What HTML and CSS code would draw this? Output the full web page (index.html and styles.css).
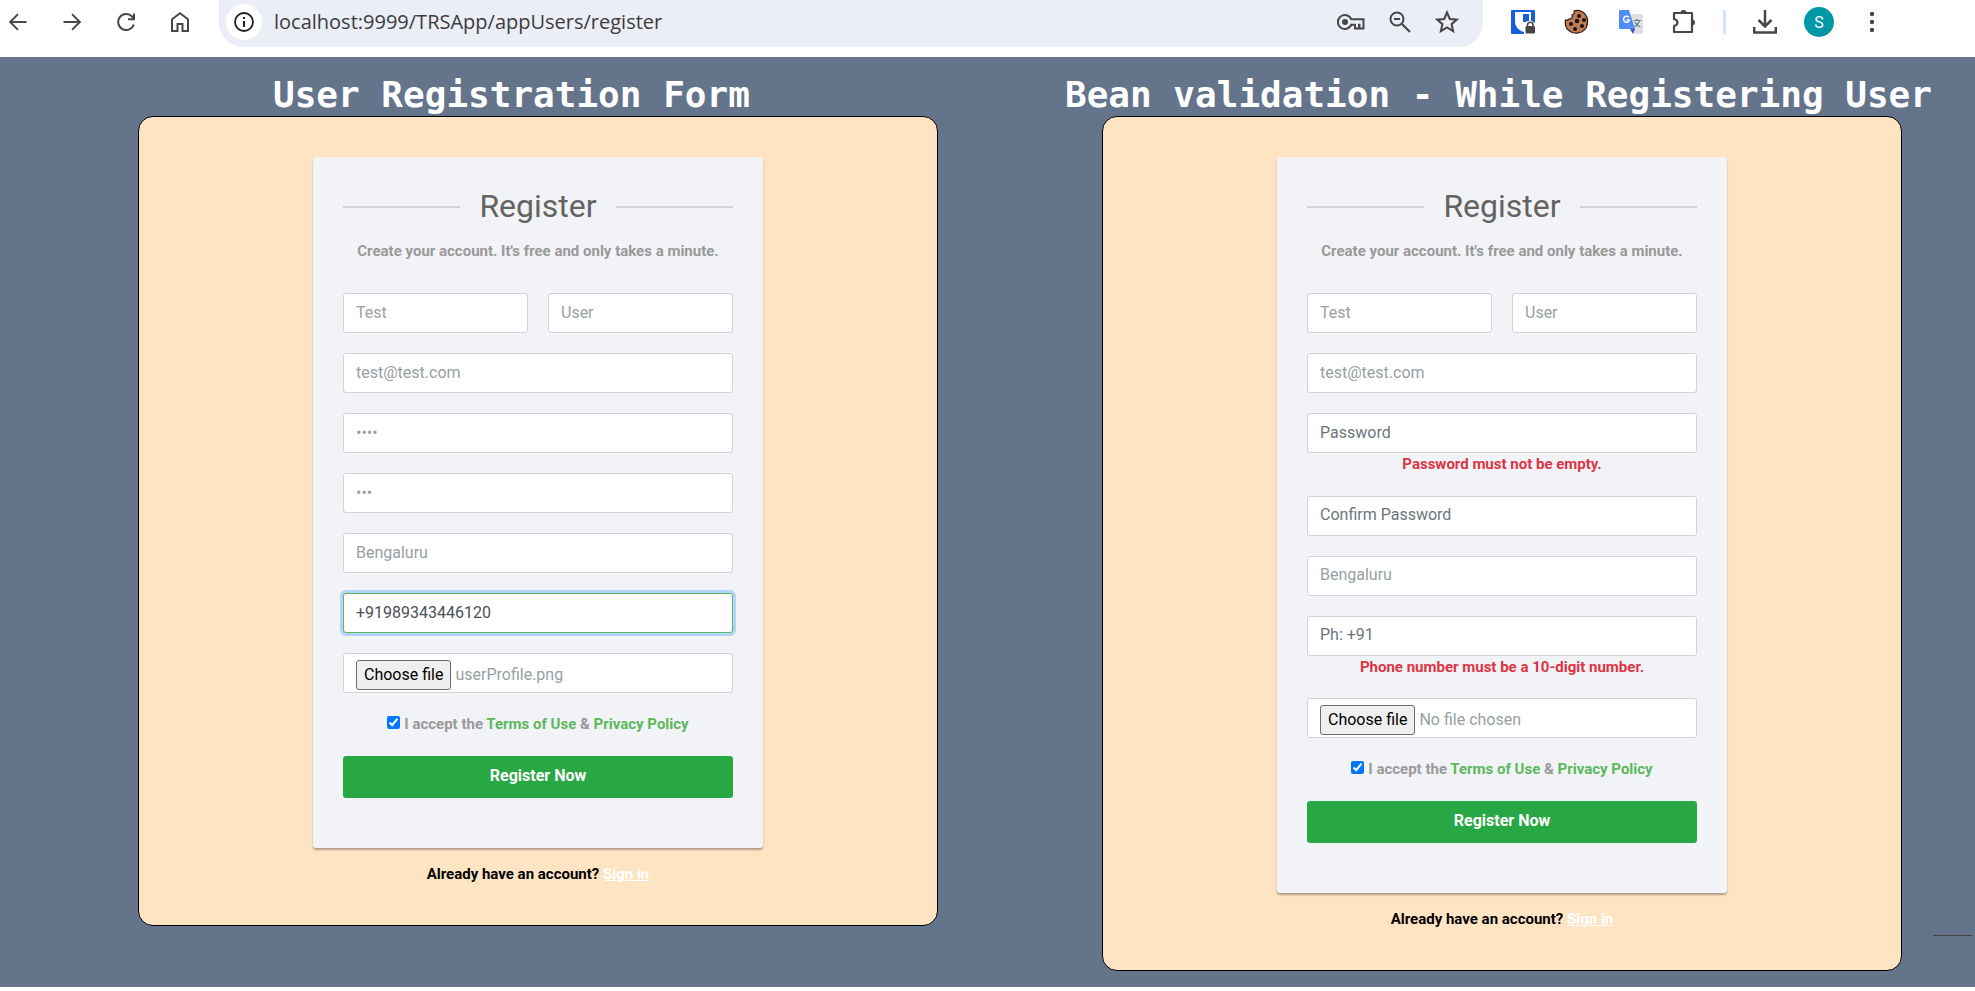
FILE: index.html
```html
<!DOCTYPE html>
<html lang="en">
<head>
<meta charset="utf-8">
<title>User Registration</title>
<link rel="stylesheet" href="styles.css">
</head>
<body>
<header class="toolbar">
  <nav class="nav" aria-label="Browser">
    <button class="icon-btn" type="button" aria-label="Back"><svg width="18" height="18" viewBox="0 0 18 18"><path d="M17.500 9H1.500M9 1.200L1.200 9L9 16.800" fill="none" stroke="#474747" stroke-width="1.900"/></svg></button>
    <button class="icon-btn" type="button" aria-label="Forward"><svg width="18" height="18" viewBox="0 0 18 18"><path d="M.5 9H16.500M9 1.200L16.800 9L9 16.800" fill="none" stroke="#474747" stroke-width="1.900"/></svg></button>
    <button class="icon-btn" type="button" aria-label="Reload"><svg width="18" height="18" viewBox="0 0 18 18"><path d="M16.800 11.500A8 8 0 1 1 15 3.500L17 5.700M17 .5V6.200H11" fill="none" stroke="#474747" stroke-width="2"/></svg></button>
    <button class="icon-btn" type="button" aria-label="Home"><svg width="18" height="20" viewBox="0 0 18 20"><path d="M1 7.300L9 1.300L17 7.300V19H11.500V12H6.500V19H1Z" fill="none" stroke="#474747" stroke-width="2"/></svg></button>
  </nav>
  <div class="address">
    <span class="site-info"><svg width="20" height="20" viewBox="0 0 20 20"><circle cx="10" cy="10" r="9" fill="none" stroke="#1f1f1f" stroke-width="1.800"/><path d="M10 9V15M10 5V7" stroke="#1f1f1f" stroke-width="2"/></svg></span>
    <input class="url" type="text" aria-label="Address" value="localhost:9999/TRSApp/appUsers/register">
    <div class="address-icons">
      <button class="icon-btn" type="button" aria-label="Passwords"><svg width="28" height="18" viewBox="0 0 28 18"><path d="M14.300 6.300A7 7 0 1 0 14.300 11.700H18V15.500H22V11.700H22.500V15.500H26.500V6.300Z" fill="none" stroke="#474747" stroke-width="2"/><circle cx="8" cy="9" r="3" fill="#474747"/></svg></button>
      <button class="icon-btn" type="button" aria-label="Zoom"><svg width="22" height="22" viewBox="0 0 22 22"><circle cx="8" cy="8" r="6.500" fill="none" stroke="#474747" stroke-width="2"/><path d="M13 13L21 21M5 8H11" stroke="#474747" stroke-width="2.200"/></svg></button>
      <button class="icon-btn" type="button" aria-label="Bookmark"><svg width="24" height="24" viewBox="0 0 22 22"><path d="M11 2.300L13.600 8.200L20 8.800L15.200 13L16.600 19.300L11 16L5.400 19.300L6.800 13L2 8.800L8.400 8.200Z" fill="none" stroke="#474747" stroke-width="1.900"/></svg></button>
    </div>
  </div>
  <div class="extensions">
    <button class="icon-btn" type="button" aria-label="Bitwarden"><svg width="26" height="26" viewBox="0 0 26 26"><rect x="1" y="1" width="24" height="24" rx="1" fill="#175ddc"/><path d="M5 3H21V13Q21 20 13 23Q5 19 5 13Z" fill="#fff"/><path d="M13 5H19V13H13Z" fill="#175ddc"/><path d="M14 15L17 12H22L26 15V26H14Z" fill="#fff"/><rect x="15.500" y="17" width="9.500" height="7.500" rx="1" fill="#474747"/><path d="M17.500 18V16A2.700 2.700 0 0 1 23 16V18" fill="none" stroke="#474747" stroke-width="1.600"/></svg></button>
    <button class="icon-btn" type="button" aria-label="Cookies"><svg width="26" height="26" viewBox="0 0 26 26"><path d="M10 2Q11 5 8 6Q9 10 5 10Q3 12 1.500 11Q0 20 8 23.500Q17 26 22 19Q26 10 20 4Q16 0 10 2Z" fill="#c07c58" stroke="#2b1a12" stroke-width="1.200"/><g fill="#1d1411"><circle cx="15" cy="7" r="2"/><circle cx="20" cy="11" r="2"/><circle cx="13" cy="12" r="2.200"/><circle cx="7" cy="15" r="2"/><circle cx="18" cy="17" r="2"/><circle cx="11" cy="20" r="2"/></g></svg></button>
    <button class="icon-btn" type="button" aria-label="Translate"><svg width="26" height="26" viewBox="0 0 26 26"><path d="M11 5H23Q25 5 25 7V23Q25 25 23 25H16Z" fill="#dfe1e4"/><path d="M2 1H11L17 20H2Q1 20 1 19V2Q1 1 2 1Z" fill="#4f8df5"/><path d="M12 20H17L15 25Z" fill="#3b51c4"/><path d="M11 8.500A3 3 0 1 0 11.400 11H8.500" fill="none" stroke="#fff" stroke-width="1.500"/><path d="M15.500 11.500H23M19 10V12M21.500 12Q20 16 16.500 18M17 13Q19 17 22.500 18" fill="none" stroke="#6a8086" stroke-width="1.200"/></svg></button>
    <button class="icon-btn" type="button" aria-label="Extensions"><svg width="26" height="26" viewBox="0 0 26 26"><path d="M2 4H20V23H2V17Q5.500 16 5.500 13.500Q5.500 11 2 10Z" fill="none" stroke="#474747" stroke-width="2.200" stroke-linejoin="round"/><path d="M8.500 4A3 3 0 0 1 14.500 4ZM20 10.500A3 3 0 0 1 20 16.500Z" fill="#474747"/></svg></button>
  </div>
  <div class="extensions browser-actions">
    <span class="divider"></span>
    <button class="icon-btn" type="button" aria-label="Downloads"><svg width="24" height="26" viewBox="0 0 24 26"><path d="M12 1V17M5.500 11L12 17.500L18.500 11M1.200 18V23.500H22.800V18" fill="none" stroke="#474747" stroke-width="2.500"/></svg></button>
    <button class="avatar" type="button">S</button>
    <button class="icon-btn menu-btn" type="button" aria-label="Menu"><svg width="6" height="24" viewBox="0 0 6 24"><g fill="#474747"><circle cx="3" cy="4" r="2.200"/><circle cx="3" cy="12" r="2.200"/><circle cx="3" cy="20" r="2.200"/></g></svg></button>
  </div>
</header>
<main class="page">
  <section class="panel">
    <h1 class="panel-title panel-title-start">User Registration Form</h1>
    <div class="frame">
      <form class="card">
        <h2 class="card-title">Register</h2>
        <p class="hint">Create your account. It's free and only takes a minute.</p>
        <div class="row">
          <input class="field" type="text" aria-label="First name" value="Test">
          <input class="field" type="text" aria-label="Last name" value="User">
        </div>
        <div class="group"><input class="field" type="email" aria-label="Email" value="test@test.com"></div>
        <div class="group"><input class="field" type="password" aria-label="Password" value="test"></div>
        <div class="group"><input class="field" type="password" aria-label="Confirm password" value="tes"></div>
        <div class="group"><input class="field" type="text" aria-label="City" value="Bengaluru"></div>
        <div class="group"><input class="field field-active" type="tel" aria-label="Phone" value="+91989343446120"></div>
        <div class="group"><div class="field file"><button class="file-btn" type="button">Choose file</button><span>userProfile.png</span></div></div>
        <div class="terms"><input class="check" type="checkbox" id="accept-a" checked><label for="accept-a">I accept the <a href="#">Terms of Use</a> &amp; <a href="#">Privacy Policy</a></label></div>
        <button class="submit" type="submit">Register Now</button>
      </form>
      <p class="signin">Already have an account? <a href="#">Sign in</a></p>
    </div>
  </section>
  <section class="panel">
    <h1 class="panel-title panel-title-wide">Bean validation - While Registering User</h1>
    <div class="frame">
      <form class="card">
        <h2 class="card-title">Register</h2>
        <p class="hint">Create your account. It's free and only takes a minute.</p>
        <div class="row">
          <input class="field" type="text" aria-label="First name" value="Test">
          <input class="field" type="text" aria-label="Last name" value="User">
        </div>
        <div class="group"><input class="field" type="email" aria-label="Email" value="test@test.com"></div>
        <div class="group"><input class="field" type="password" aria-label="Password" placeholder="Password"><p class="error">Password must not be empty.</p></div>
        <div class="group"><input class="field" type="password" aria-label="Confirm password" placeholder="Confirm Password"></div>
        <div class="group"><input class="field" type="text" aria-label="City" value="Bengaluru"></div>
        <div class="group"><input class="field" type="tel" aria-label="Phone" placeholder="Ph: +91"><p class="error">Phone number must be a 10-digit number.</p></div>
        <div class="group"><div class="field file"><button class="file-btn" type="button">Choose file</button><span>No file chosen</span></div></div>
        <div class="terms"><input class="check" type="checkbox" id="accept-b" checked><label for="accept-b">I accept the <a href="#">Terms of Use</a> &amp; <a href="#">Privacy Policy</a></label></div>
        <button class="submit" type="submit">Register Now</button>
      </form>
      <p class="signin">Already have an account? <a href="#">Sign in</a></p>
    </div>
  </section>
  <span class="rule"></span>
</main>
</body>
</html>
```
FILE: styles.css
```css
* { box-sizing: border-box; }
body { margin: 0; background: #fff; font-family: Roboto, "Liberation Sans", sans-serif; }
button, input { font-family: inherit; }
h1, h2, p { margin: 0; }

.toolbar { display: flex; height: 57px; padding: 0 100px 0 9px; }
.nav { display: flex; align-items: center; gap: 36px; height: 44px; }
.icon-btn { display: flex; padding: 0; border: 0; background: none; }
.address { display: flex; flex: 1; align-items: center; height: 47px; margin-left: 30px; padding: 0 24px 3px 7px; border-radius: 0 0 24px 24px; background: #ebeef7; }
.site-info { display: flex; align-items: center; justify-content: center; width: 36px; height: 36px; border-radius: 50%; background: #fff; }
.url { flex: 1; min-width: 0; height: 28px; margin-left: 12px; padding: 0 0 2px; border: 0; background: none; color: #3c3c3c; font: 20px "Open Sans", "Noto Sans", sans-serif; }
.address-icons { display: flex; align-items: center; gap: 24px; }
.extensions { display: flex; align-items: center; gap: 28px; height: 44px; margin-left: 27px; }
.browser-actions { gap: 27px; margin-left: 25px; }
.divider { width: 3px; height: 24px; background: #d3e3fd; }
.avatar { width: 30px; height: 30px; padding: 0; border: 0; border-radius: 50%; background: #0097a7; color: #fff; font-size: 16px; }
.menu-btn { margin-left: 8px; }

.page { position: relative; display: grid; grid-template-columns: 1fr 1fr; align-items: start; gap: 164px; min-height: 930px; padding: 16px 73px 16px 138px; background: #64748b; }
.panel-title { height: 43px; color: #fff; font: bold 36px/43px "DejaVu Sans Mono", monospace; white-space: nowrap; }
.panel-title-start { padding-left: 135px; }
.panel-title-wide { margin: 0 -73px 0 -37px; }
.frame { padding: 40px; border: 1px solid #000; border-radius: 15px; background: #ffe4c4; }
.card { width: 450px; max-width: 100%; margin: 0 auto 15px; padding: 30px; border-radius: 3px; background: #f2f3f7; box-shadow: 0 2px 2px rgba(0, 0, 0, .3); color: #999; }
.card-title { display: grid; grid-template-columns: 1fr auto 1fr; align-items: center; gap: 19px; margin-bottom: 15px; color: #636363; font-size: 32px; font-weight: 400; line-height: 38px; }
.card-title::before, .card-title::after { content: ""; height: 2px; margin-top: 2px; background: #d4d4d4; }
.hint { margin-bottom: 30px; font-size: 15px; font-weight: 700; line-height: 23px; text-align: center; }
.row { display: grid; grid-template-columns: 1fr 1fr; gap: 20px; margin-bottom: 20px; }
.group { margin-bottom: 20px; }
.field { display: block; width: 100%; height: 40px; padding: 5px 12px 7px; border: 1px solid #ced4da; border-radius: 3px; background: #fff; color: #969fa4; font-size: 16px; line-height: 24px; }
.field::placeholder { color: #6c757d; opacity: 1; }
.field-active { border-color: #5cb85c; box-shadow: 0 0 0 3px #b3d4fb; color: #495057; }
.file { display: flex; align-items: flex-start; gap: 4px; padding-top: 6px; line-height: 30px; }
.file-btn { height: 30px; padding: 0 7px 1px; border: 1px solid #6b6b6b; border-radius: 3px; background: #efefef; color: #000; font-size: 16px; }
.error { color: #dc3545; font-size: 15px; font-weight: 700; line-height: 1.5; text-align: center; }
.terms { display: flex; align-items: center; justify-content: center; gap: 4px; margin-bottom: 20px; font-size: 15px; font-weight: 700; line-height: 1.5; }
.terms a { color: #5cb85c; text-decoration: none; }
.check { width: 13px; height: 13px; margin: 0 0 3px; accent-color: #0075ff; }
.submit { display: block; width: 100%; height: 42px; margin-bottom: 20px; padding: 0 0 2px; border: 0; border-radius: 3px; background: #28a745; color: #fff; font-size: 16px; font-weight: 700; }
.signin { color: #000; font-size: 15px; font-weight: 700; line-height: 1.5; text-align: center; }
.signin a { color: #fff; }
.rule { position: absolute; right: 3px; bottom: 51px; width: 39px; height: 1px; background: #444; }
```
